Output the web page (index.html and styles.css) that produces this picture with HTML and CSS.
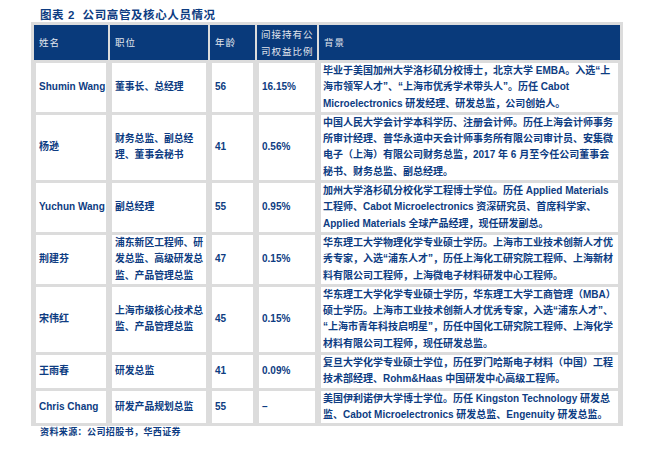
FILE: index.html
```html
<!DOCTYPE html>
<html lang="zh">
<head>
<meta charset="utf-8">
<link rel="stylesheet" href="styles.css">
</head>
<body>
<div class="page">
  <div class="title">图表 2 &nbsp;公司高管及核心人员情况</div>
  <table class="grid">
    <thead>
      <tr>
        <th class="c1">姓名</th>
        <th class="c2">职位</th>
        <th class="c3">年龄</th>
        <th class="c4">间接持有公司权益比例</th>
        <th class="c5">背景</th>
      </tr>
    </thead>
    <tbody>
      <tr>
        <td class="name">Shumin Wang</td>
        <td class="pos">董事长、总经理</td>
        <td>56</td>
        <td>16.15%</td>
        <td class="bg">毕业于美国加州大学洛杉矶分校博士，北京大学 EMBA。入选“上海市领军人才”、“上海市优秀学术带头人”。历任 Cabot Microelectronics 研发经理、研发总监，公司创始人。</td>
      </tr>
      <tr>
        <td class="name">杨逊</td>
        <td class="pos">财务总监、副总经理、董事会秘书</td>
        <td>41</td>
        <td>0.56%</td>
        <td class="bg">中国人民大学会计学本科学历、注册会计师。历任上海会计师事务所审计经理、普华永道中天会计师事务所有限公司审计员、安集微电子（上海）有限公司财务总监，2017 年 6 月至今任公司董事会秘书、财务总监、副总经理。</td>
      </tr>
      <tr>
        <td class="name">Yuchun Wang</td>
        <td class="pos">副总经理</td>
        <td>55</td>
        <td>0.95%</td>
        <td class="bg">加州大学洛杉矶分校化学工程博士学位。历任 Applied Materials 工程师、Cabot Microelectronics 资深研究员、首席科学家、Applied Materials 全球产品经理，现任研发副总。</td>
      </tr>
      <tr>
        <td class="name">荆建芬</td>
        <td class="pos">浦东新区工程师、研发总监、高级研发总监、产品管理总监</td>
        <td>47</td>
        <td>0.15%</td>
        <td class="bg">华东理工大学物理化学专业硕士学历。上海市工业技术创新人才优秀专家，入选“浦东人才”，历任上海化工研究院工程师、上海新材料有限公司工程师，上海微电子材料研发中心工程师。</td>
      </tr>
      <tr>
        <td class="name">宋伟红</td>
        <td class="pos">上海市级核心技术总监、产品管理总监</td>
        <td>45</td>
        <td>0.15%</td>
        <td class="bg">华东理工大学化学专业硕士学历，华东理工大学工商管理（MBA）硕士学历。上海市工业技术创新人才优秀专家，入选“浦东人才”、“上海市青年科技启明星”，历任中国化工研究院工程师、上海化学材料有限公司工程师，现任研发总监。</td>
      </tr>
      <tr>
        <td class="name">王雨春</td>
        <td class="pos">研发总监</td>
        <td>41</td>
        <td>0.09%</td>
        <td class="bg">复旦大学化学专业硕士学位，历任罗门哈斯电子材料（中国）工程技术部经理、Rohm&amp;Haas 中国研发中心高级工程师。</td>
      </tr>
      <tr>
        <td class="name">Chris Chang</td>
        <td class="pos">研发产品规划总监</td>
        <td>55</td>
        <td>–</td>
        <td class="bg">美国伊利诺伊大学博士学位。历任 Kingston Technology 研发总监、Cabot Microelectronics 研发总监、Engenuity 研发总监。</td>
      </tr>
    </tbody>
  </table>
  <div class="source">资料来源：公司招股书，华西证券</div>
</div>
</body>
</html>
```

FILE: styles.css
```css
html, body {
  margin: 0;
  padding: 0;
  background: #ffffff;
}

.page {
  padding-left: 31px;
  font-family: "Liberation Sans", "Noto Sans CJK SC", sans-serif;
  color: #0d3c82;
}

.title {
  margin: 8px 0 0 9px;
  height: 14px;
  line-height: 14px;
  font-size: 11.5px;
  font-weight: 700;
  letter-spacing: 0.6px;
  color: #0d3c82;
  white-space: pre;
}

.grid {
  table-layout: fixed;
  width: 592px;
  border-collapse: separate;
  border-spacing: 2px 3px;
  padding: 0 1px;
  background: #dcdcdc;
}

.grid th {
  box-sizing: border-box;
  height: 35px;
  padding: 0 5px;
  background: #093a7b;
  color: #e2e6ee;
  font-family: "Noto Sans CJK SC", sans-serif;
  font-size: 9.5px;
  font-weight: 400;
  letter-spacing: 1px;
  line-height: 17px;
  text-align: left;
  vertical-align: middle;
}

.grid th.c1 { width: 74px; }
.grid th.c2 { width: 98px; }
.grid th.c3 { width: 45px; }
.grid th.c4 { width: 60px; padding-left: 4px; padding-right: 2px; }
.grid th.c5 { width: 301px; }

.grid td {
  box-sizing: border-box;
  padding: 0 1px 0 3px;
  border-left: 2px solid #dcdcdc;
  border-right: 2px solid #dcdcdc;
  background: #ffffff;
  font-size: 10px;
  font-weight: 700;
  line-height: 16.3px;
  letter-spacing: 0;
  vertical-align: middle;
  text-align: left;
  color: #0d3c82;
}

.grid td.name {
  white-space: nowrap;
}

.grid td.pos {
  padding: 0 0 0 3px;
  font-size: 9.8px;
}

.grid td.bg {
  padding: 0 1px 0 2px;
}

.source {
  margin-left: 9px;
  height: 12px;
  line-height: 12px;
  font-size: 9px;
  font-weight: 700;
  letter-spacing: 0.4px;
  color: #0d3c82;
}
```
